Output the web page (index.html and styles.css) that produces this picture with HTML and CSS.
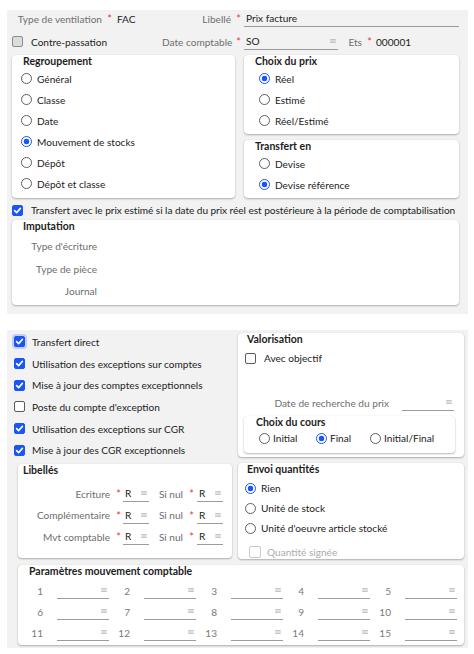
FILE: index.html
```html
<!DOCTYPE html>
<html lang="fr">
<head>
<meta charset="utf-8">
<link rel="stylesheet" href="styles.css">
</head>
<body>
<div class="panel panel-top">
  <div class="frow">
    <span class="lbl w-tv">Type de ventilation</span><span class="req">*</span><span class="val w-fac">FAC</span>
    <span class="lbl w-lib">Libellé</span><span class="req">*</span><span class="field grow">Prix facture</span>
  </div>
  <div class="frow frow-2">
    <div class="chk w-cp"><span class="cb gray"></span><span>Contre-passation</span></div>
    <span class="lbl w-dc">Date comptable</span><span class="req">*</span>
    <span class="field w-so">SO<svg class="ico" width="7" height="5" viewBox="0 0 7 5"><path d="M0 .5h7M0 2.5h7M0 4.5h7"/></svg></span>
    <span class="lbl w-ets">Ets</span><span class="req">*</span><span class="val ets">000001</span>
  </div>

  <div class="cols">
    <section class="card regroup">
      <h3 class="ctitle">Regroupement</h3>
      <div class="rlist">
        <div class="ropt"><span class="rd"></span>Général</div>
        <div class="ropt"><span class="rd"></span>Classe</div>
        <div class="ropt"><span class="rd"></span>Date</div>
        <div class="ropt"><span class="rd on"></span>Mouvement de stocks</div>
        <div class="ropt"><span class="rd"></span>Dépôt</div>
        <div class="ropt"><span class="rd"></span>Dépôt et classe</div>
      </div>
    </section>
    <div class="rcol">
      <section class="card choix">
        <h3 class="ctitle">Choix du prix</h3>
        <div class="rlist">
          <div class="ropt"><span class="rd on"></span>Réel</div>
          <div class="ropt"><span class="rd"></span>Estimé</div>
          <div class="ropt"><span class="rd"></span>Réel/Estimé</div>
        </div>
      </section>
      <section class="card transfert">
        <h3 class="ctitle">Transfert en</h3>
        <div class="rlist">
          <div class="ropt"><span class="rd"></span>Devise</div>
          <div class="ropt"><span class="rd on"></span>Devise référence</div>
        </div>
      </section>
    </div>
  </div>

  <div class="chk chk-long"><span class="cb on"><svg width="9" height="9" viewBox="0 0 9 9"><path d="M1.6 4.6l2 2 3.8-4.2"/></svg></span><span class="longtxt">Transfert avec le prix estimé si la date du prix réel est postérieure à la période de comptabilisation</span></div>

  <section class="card imput">
    <h3 class="ctitle">Imputation</h3>
    <div class="ilist">
      <div class="irow"><span class="lbl">Type d'écriture</span></div>
      <div class="irow"><span class="lbl">Type de pièce</span></div>
      <div class="irow"><span class="lbl">Journal</span></div>
    </div>
  </section>
</div>

<div class="panel panel-bottom">
  <div class="bcols">
    <div class="bleft">
      <div class="clist">
        <div class="chk crow"><span class="cb on focus"><svg width="9" height="9" viewBox="0 0 9 9"><path d="M1.6 4.6l2 2 3.8-4.2"/></svg></span><span>Transfert direct</span></div>
        <div class="chk crow"><span class="cb on"><svg width="9" height="9" viewBox="0 0 9 9"><path d="M1.6 4.6l2 2 3.8-4.2"/></svg></span><span>Utilisation des exceptions sur comptes</span></div>
        <div class="chk crow"><span class="cb on"><svg width="9" height="9" viewBox="0 0 9 9"><path d="M1.6 4.6l2 2 3.8-4.2"/></svg></span><span>Mise à jour des comptes exceptionnels</span></div>
        <div class="chk crow"><span class="cb"></span><span>Poste du compte d'exception</span></div>
        <div class="chk crow"><span class="cb on"><svg width="9" height="9" viewBox="0 0 9 9"><path d="M1.6 4.6l2 2 3.8-4.2"/></svg></span><span>Utilisation des exceptions sur CGR</span></div>
        <div class="chk crow"><span class="cb on"><svg width="9" height="9" viewBox="0 0 9 9"><path d="M1.6 4.6l2 2 3.8-4.2"/></svg></span><span>Mise à jour des CGR exceptionnels</span></div>
      </div>
      <section class="card libelles">
        <h3 class="ctitle">Libellés</h3>
        <div class="llist">
          <div class="lrow">
            <span class="lbl l1">Ecriture</span><span class="req r1">*</span><span class="field sm">R<svg class="ico" width="7" height="5" viewBox="0 0 7 5"><path d="M0 .5h7M0 2.5h7M0 4.5h7"/></svg></span>
            <span class="lbl l2">Si nul</span><span class="req r2">*</span><span class="field sm">R<svg class="ico" width="7" height="5" viewBox="0 0 7 5"><path d="M0 .5h7M0 2.5h7M0 4.5h7"/></svg></span>
          </div>
          <div class="lrow">
            <span class="lbl l1">Complémentaire</span><span class="req r1">*</span><span class="field sm">R<svg class="ico" width="7" height="5" viewBox="0 0 7 5"><path d="M0 .5h7M0 2.5h7M0 4.5h7"/></svg></span>
            <span class="lbl l2">Si nul</span><span class="req r2">*</span><span class="field sm">R<svg class="ico" width="7" height="5" viewBox="0 0 7 5"><path d="M0 .5h7M0 2.5h7M0 4.5h7"/></svg></span>
          </div>
          <div class="lrow">
            <span class="lbl l1">Mvt comptable</span><span class="req r1">*</span><span class="field sm">R<svg class="ico" width="7" height="5" viewBox="0 0 7 5"><path d="M0 .5h7M0 2.5h7M0 4.5h7"/></svg></span>
            <span class="lbl l2">Si nul</span><span class="req r2">*</span><span class="field sm">R<svg class="ico" width="7" height="5" viewBox="0 0 7 5"><path d="M0 .5h7M0 2.5h7M0 4.5h7"/></svg></span>
          </div>
        </div>
      </section>
    </div>

    <div class="bright">
      <section class="card valor">
        <h3 class="ctitle">Valorisation</h3>
        <div class="chk vchk"><span class="cb"></span><span>Avec objectif</span></div>
        <div class="drow">
          <span class="lbl dlbl">Date de recherche du prix</span>
          <span class="field empty dfield"><svg class="ico" width="7" height="5" viewBox="0 0 7 5"><path d="M0 .5h7M0 2.5h7M0 4.5h7"/></svg></span>
        </div>
        <section class="card cours">
          <h3 class="ctitle">Choix du cours</h3>
          <div class="hradios">
            <div class="hopt o1"><span class="rd"></span>Initial</div>
            <div class="hopt o2"><span class="rd on"></span>Final</div>
            <div class="hopt"><span class="rd"></span>Initial/Final</div>
          </div>
        </section>
      </section>
      <section class="card envoi">
        <h3 class="ctitle">Envoi quantités</h3>
        <div class="rlist">
          <div class="ropt"><span class="rd on"></span>Rien</div>
          <div class="ropt"><span class="rd"></span>Unité de stock</div>
          <div class="ropt"><span class="rd"></span>Unité d'oeuvre article stocké</div>
        </div>
        <div class="chk qchk"><span class="cb dis"></span><span>Quantité signée</span></div>
      </section>
    </div>
  </div>

  <section class="card params">
    <h3 class="ctitle">Paramètres mouvement comptable</h3>
    <div class="pgrid">
      <span class="pnum">1</span><span class="field empty"><svg class="ico" width="7" height="5" viewBox="0 0 7 5"><path d="M0 .5h7M0 2.5h7M0 4.5h7"/></svg></span>
      <span class="pnum">2</span><span class="field empty"><svg class="ico" width="7" height="5" viewBox="0 0 7 5"><path d="M0 .5h7M0 2.5h7M0 4.5h7"/></svg></span>
      <span class="pnum">3</span><span class="field empty"><svg class="ico" width="7" height="5" viewBox="0 0 7 5"><path d="M0 .5h7M0 2.5h7M0 4.5h7"/></svg></span>
      <span class="pnum">4</span><span class="field empty"><svg class="ico" width="7" height="5" viewBox="0 0 7 5"><path d="M0 .5h7M0 2.5h7M0 4.5h7"/></svg></span>
      <span class="pnum">5</span><span class="field empty"><svg class="ico" width="7" height="5" viewBox="0 0 7 5"><path d="M0 .5h7M0 2.5h7M0 4.5h7"/></svg></span>
      <span class="pnum">6</span><span class="field empty"><svg class="ico" width="7" height="5" viewBox="0 0 7 5"><path d="M0 .5h7M0 2.5h7M0 4.5h7"/></svg></span>
      <span class="pnum">7</span><span class="field empty"><svg class="ico" width="7" height="5" viewBox="0 0 7 5"><path d="M0 .5h7M0 2.5h7M0 4.5h7"/></svg></span>
      <span class="pnum">8</span><span class="field empty"><svg class="ico" width="7" height="5" viewBox="0 0 7 5"><path d="M0 .5h7M0 2.5h7M0 4.5h7"/></svg></span>
      <span class="pnum">9</span><span class="field empty"><svg class="ico" width="7" height="5" viewBox="0 0 7 5"><path d="M0 .5h7M0 2.5h7M0 4.5h7"/></svg></span>
      <span class="pnum">10</span><span class="field empty"><svg class="ico" width="7" height="5" viewBox="0 0 7 5"><path d="M0 .5h7M0 2.5h7M0 4.5h7"/></svg></span>
      <span class="pnum">11</span><span class="field empty"><svg class="ico" width="7" height="5" viewBox="0 0 7 5"><path d="M0 .5h7M0 2.5h7M0 4.5h7"/></svg></span>
      <span class="pnum">12</span><span class="field empty"><svg class="ico" width="7" height="5" viewBox="0 0 7 5"><path d="M0 .5h7M0 2.5h7M0 4.5h7"/></svg></span>
      <span class="pnum">13</span><span class="field empty"><svg class="ico" width="7" height="5" viewBox="0 0 7 5"><path d="M0 .5h7M0 2.5h7M0 4.5h7"/></svg></span>
      <span class="pnum">14</span><span class="field empty"><svg class="ico" width="7" height="5" viewBox="0 0 7 5"><path d="M0 .5h7M0 2.5h7M0 4.5h7"/></svg></span>
      <span class="pnum">15</span><span class="field empty"><svg class="ico" width="7" height="5" viewBox="0 0 7 5"><path d="M0 .5h7M0 2.5h7M0 4.5h7"/></svg></span>
    </div>
  </section>
</div>
</body>
</html>
```

FILE: styles.css
```css
* { box-sizing: border-box; margin: 0; padding: 0; }
html, body { background: #fff; }
body {
  margin: 0;
  font-family: Lato, "Liberation Sans", sans-serif;
  font-size: 10.1px;
  color: #222;
}

.panel { background: #f2f2f2; margin-left: 7px; width: 461px; }
.panel-top { margin-top: 10px; padding: 0 9px 9px 5px; }
.panel-bottom { margin-top: 16px; padding: 3px 4px 3px 11px; }

/* form rows */
.frow { display: flex; align-items: center; height: 17px; }
.frow-2 { margin-top: 6px; }
.lbl { color: #6e6e6e; text-align: right; white-space: nowrap; flex: none; }
.req { color: #e8403a; width: 13px; text-align: right; padding-right: 3px; flex: none; font-size: 11px; }
.val { flex: none; white-space: nowrap; }
.field {
  display: flex; align-items: center; justify-content: space-between;
  height: 17px; line-height: 16px;
  border-bottom: 1px solid #9c9c9c;
  padding: 0 2px; flex: none; white-space: nowrap;
}
.field.empty { justify-content: flex-end; }
.grow { flex: 1; }
.ico { flex: none; width: 6px; height: 4px; }
.ico path { stroke: #b0b0b0; stroke-width: 1; fill: none; }

.w-tv { width: 90px; }
.w-fac { width: 57px; padding-left: 2px; }
.w-lib { width: 59px; }
.w-cp { width: 150px; }
.w-dc { width: 69px; }
.w-so { width: 94px; }
.w-ets { width: 24px; }
.ets { padding-left: 1px; }

/* checkbox */
.chk { display: flex; align-items: center; gap: 8px; white-space: nowrap; }
.cb {
  width: 11px; height: 11px; flex: none;
  border: 1px solid #5a5a5a; border-radius: 2px; background: #fff;
  display: flex; align-items: center; justify-content: center;
}
.cb svg path { stroke: #fff; stroke-width: 1.6; fill: none; stroke-linecap: round; stroke-linejoin: round; }
.cb.on { background: #1a56f5; border-color: #1a56f5; }
.cb.gray { background: #dcdcdc; border-color: #8c8c8c; }
.cb.focus { box-shadow: 0 0 0 2px rgba(110, 140, 255, .35); }
.cb.dis { width: 12px; height: 12px; border-color: #c9c9c9; }

/* radio */
.rd {
  width: 11px; height: 11px; flex: none;
  border: 1px solid #5f5f5f; border-radius: 50%; background: #fff;
}
.rd.on { border-color: #1a56f5; background: radial-gradient(circle, #1a56f5 0 2.6px, #fff 3.1px); }

/* cards */
.card { background: #fff; border-radius: 4px; box-shadow: 0 1px 2px rgba(0,0,0,.28), 0 0 1px rgba(0,0,0,.12); }
.ctitle { font-size: 10.5px; font-weight: 700; line-height: 12px; padding-left: 11px; color: #1d1d1d; }
.rlist { padding-top: 1px; }
.ropt { display: flex; align-items: center; gap: 5px; height: 21px; white-space: nowrap; }

.cols { display: flex; gap: 9px; margin-top: 5px; }
.regroup { width: 223px; height: 143px; }
.regroup .ropt { padding-left: 9px; }
.rcol { width: 215px; display: flex; flex-direction: column; gap: 6px; }
.choix { height: 79px; }
.transfert { height: 58px; }
.choix .ropt, .transfert .ropt { padding-left: 15px; }

.chk-long { height: 14px; margin-top: 5px; padding-left: 0; }
.longtxt { letter-spacing: -0.05px; }
.imput { margin-top: 3px; height: 85px; }
.ilist { padding-top: 3px; }
.irow { height: 22.5px; display: flex; align-items: center; }
.irow .lbl { width: 85px; }

/* bottom */
.bcols { display: flex; gap: 6px; }
.bleft { width: 214px; }
.bright { width: 226px; }
.clist { margin: -2px 0 0 -4px; }
.crow { height: 21.7px; gap: 7px; }

.libelles { margin-top: 3px; height: 94px; }
.libelles .ctitle { padding-left: 5px; }
.llist { margin-top: 7px; }
.lrow { display: flex; align-items: center; height: 21.5px; }
.l1 { width: 92px; }
.r1 { width: 13px; padding-right: 2px; }
.l2 { width: 34px; }
.r2 { width: 14px; padding-right: 3px; }
.field.sm { width: 26px; }

.valor { height: 124px; padding-top: 0; }
.valor > .ctitle { padding-left: 9px; }
.vchk { height: 20px; margin-top: 3px; padding-left: 7px; }
.drow { display: flex; align-items: center; margin-top: 26px; }
.dlbl { width: 151px; }
.dfield { width: 52px; margin-left: 13px; }
.cours { margin: 5px 0 0 6px; width: 211px; height: 37px; }
.cours .ctitle { padding-left: 12px; }
.hradios { display: flex; align-items: center; height: 20px; padding-left: 15px; }
.hopt { display: flex; align-items: center; gap: 3px; white-space: nowrap; }
.hopt.o1 { width: 57px; }
.hopt.o2 { width: 54px; }

.envoi { margin-top: 6px; height: 96px; }
.envoi > .ctitle { padding-left: 9px; }
.envoi .rlist { padding-top: 3px; }
.envoi .ropt { height: 20px; padding-left: 7px; }
.qchk { height: 14px; margin-top: 7px; padding-left: 11px; gap: 6px; color: #ababab; }

.params { margin-top: 6px; height: 80px; padding-left: 4px; }
.params .ctitle { padding-left: 7px; }
.pgrid {
  display: grid; margin-top: 3px;
  grid-template-columns: 21px 66px 21px 66px 21px 66px 21px 66px 21px 66px;
  grid-auto-rows: 21px;
  align-items: center;
}
.pgrid .field { margin-left: 14px; width: 52px; }
.pnum { text-align: right; color: #7a7a7a; }
```
